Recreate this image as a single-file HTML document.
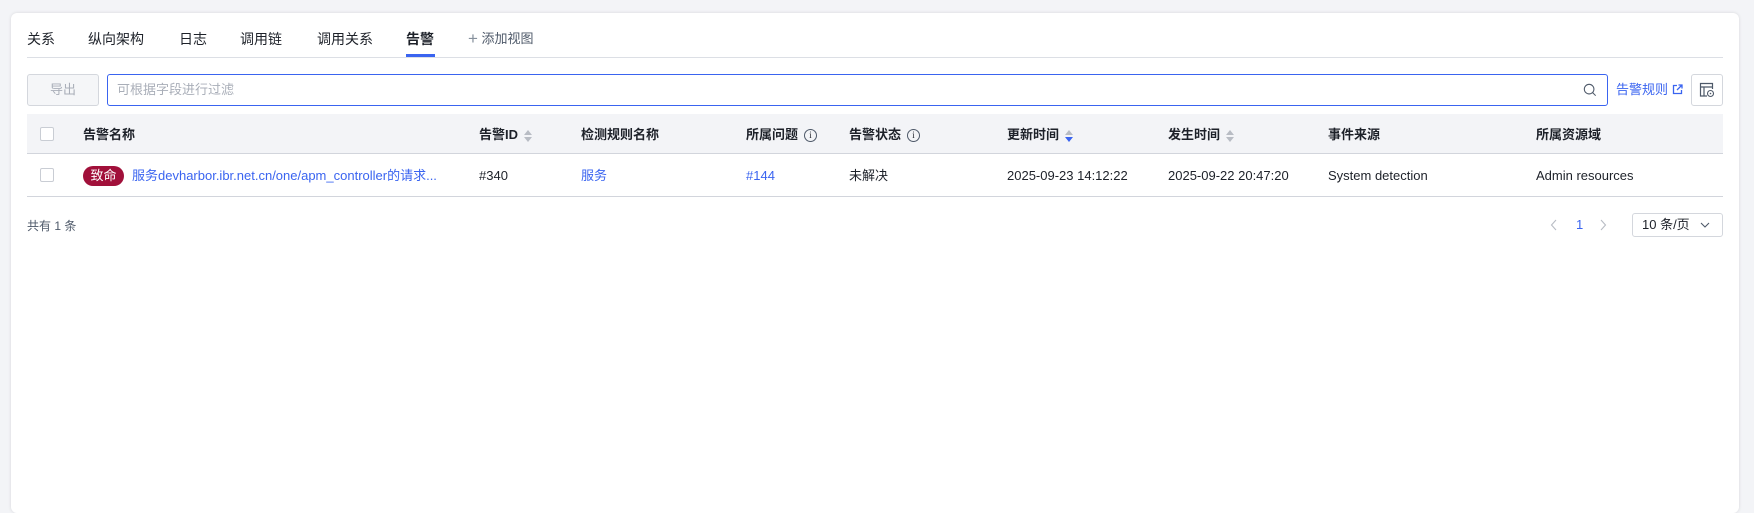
<!DOCTYPE html>
<html><head><meta charset="utf-8"><style>
*{box-sizing:border-box;margin:0;padding:0}
body{width:1754px;height:490px;background:#f3f4f7;font-family:"Liberation Sans","Noto Sans CJK SC",sans-serif;color:#1d2129;position:relative;overflow:hidden;font-size:13px}
.card{position:absolute;left:11px;top:13px;width:1728px;height:500px;background:#fff;border-radius:6px;box-shadow:0 0 3px rgba(0,0,0,.12)}
.a{position:absolute;white-space:nowrap}
.tab{position:absolute;top:29px;font-size:14px;color:#1d2129;line-height:20px}
.th{position:absolute;top:126px;font-weight:bold;font-size:13px;line-height:18px;color:#1d2129}
.td{position:absolute;top:167px;font-size:13px;line-height:18px;color:#1d2129}
.blue{color:#3a64f0}
.cb{position:absolute;left:40px;width:14px;height:14px;border:1px solid #c9cdd4;border-radius:2px;background:#fff}
.sort{display:inline-block;vertical-align:middle;margin-left:6px;width:8px;height:12px;position:relative}
.sort:before{content:"";position:absolute;left:0;top:0;border-left:4px solid transparent;border-right:4px solid transparent;border-bottom:5px solid #b8bcc4}
.sort:after{content:"";position:absolute;left:0;top:7px;border-left:4px solid transparent;border-right:4px solid transparent;border-top:5px solid var(--d,#b8bcc4)}
.info{display:inline-block;vertical-align:middle;margin-left:6px;width:13px;height:13px;border:1px solid #4e5969;border-radius:50%;font-size:9px;line-height:11px;text-align:center;font-weight:normal;font-family:"Liberation Serif",serif}
</style></head><body>
<div class="card"></div>
<div class="tab" style="left:27px">关系</div>
<div class="tab" style="left:88px">纵向架构</div>
<div class="tab" style="left:179px">日志</div>
<div class="tab" style="left:240px">调用链</div>
<div class="tab" style="left:317px">调用关系</div>
<div class="tab" style="left:406px;font-weight:bold">告警</div>
<div class="tab" style="left:468px;color:#4e5969;font-size:13px"><span style="font-size:17px;color:#86909c;vertical-align:-1px">+</span> 添加视图</div>
<div class="a" style="left:406px;top:54px;width:29px;height:3px;background:#3a64f0"></div>
<div class="a" style="left:27px;top:57px;width:1696px;height:1px;background:#dcdfe5"></div>

<div class="a" style="left:27px;top:74px;width:72px;height:32px;border:1px solid #d4d7dd;border-radius:3px;background:#f5f6f8;color:#a9aeb8;text-align:center;line-height:30px">导出</div>
<div class="a" style="left:107px;top:74px;width:1501px;height:32px;border:1px solid #3a64f0;border-radius:3px;background:#fff;color:#a9aeb8;line-height:30px;padding-left:9px">可根据字段进行过滤</div>
<svg class="a" style="left:1583px;top:83px" width="14" height="14" viewBox="0 0 16 16"><circle cx="7" cy="7" r="5.5" fill="none" stroke="#4e5969" stroke-width="1.2"/><path d="M11 11l3.5 3.5" stroke="#4e5969" stroke-width="1.2"/></svg>
<div class="a blue" style="left:1616px;top:81px;line-height:18px">告警规则</div>
<svg class="a" style="left:1672px;top:84px" width="11" height="11" viewBox="0 0 11 11"><path d="M5 1.5H1.5v8h8V6M6.5 1h3.5v3.5M10 1L5 6" fill="none" stroke="#3a64f0" stroke-width="1.3"/></svg>
<div class="a" style="left:1691px;top:74px;width:32px;height:32px;border:1px solid #d4d7dd;border-radius:3px;background:#fff"></div>
<svg class="a" style="left:1698px;top:81px" width="18" height="18" viewBox="0 0 18 18"><path d="M9 15H2.5V2.5h12V8M2.5 6h12M6 6v9" fill="none" stroke="#4e5969" stroke-width="1.2"/><circle cx="12.5" cy="12.5" r="3" fill="none" stroke="#4e5969" stroke-width="1.1"/><circle cx="12.5" cy="12.5" r="0.8" fill="#4e5969"/></svg>

<div class="a" style="left:27px;top:114px;width:1696px;height:40px;background:#f3f4f7;border-bottom:1px solid #d2d5dc"></div>
<div class="cb" style="top:127px"></div>
<div class="th" style="left:83px">告警名称</div>
<div class="th" style="left:479px">告警ID<span class="sort"></span></div>
<div class="th" style="left:581px">检测规则名称</div>
<div class="th" style="left:746px">所属问题<span class="info">i</span></div>
<div class="th" style="left:849px">告警状态<span class="info">i</span></div>
<div class="th" style="left:1007px">更新时间<span class="sort" style="--d:#3a64f0"></span></div>
<div class="th" style="left:1168px">发生时间<span class="sort"></span></div>
<div class="th" style="left:1328px">事件来源</div>
<div class="th" style="left:1536px">所属资源域</div>

<div class="a" style="left:27px;top:196px;width:1696px;height:1px;background:#d2d5dc"></div>
<div class="cb" style="top:168px"></div>
<div class="a" style="left:83px;top:166px;width:41px;height:20px;border-radius:10px;background:#a1103a;color:#fff;text-align:center;line-height:20px;font-size:13px">致命</div>
<div class="td blue" style="left:132px">服务devharbor.ibr.net.cn/one/apm_controller的请求...</div>
<div class="td" style="left:479px">#340</div>
<div class="td blue" style="left:581px">服务</div>
<div class="td blue" style="left:746px">#144</div>
<div class="td" style="left:849px">未解决</div>
<div class="td" style="left:1007px">2025-09-23 14:12:22</div>
<div class="td" style="left:1168px">2025-09-22 20:47:20</div>
<div class="td" style="left:1328px">System detection</div>
<div class="td" style="left:1536px">Admin resources</div>

<div class="a" style="left:27px;top:217px;font-size:12px;color:#4e5969">共有 1 条</div>
<svg class="a" style="left:1550px;top:219px" width="8" height="12" viewBox="0 0 8 12"><path d="M6 1L1.5 6 6 11" fill="none" stroke="#b8bcc4" stroke-width="1.1"/></svg>
<div class="a blue" style="left:1576px;top:217px">1</div>
<svg class="a" style="left:1599px;top:219px" width="8" height="12" viewBox="0 0 8 12"><path d="M2 1l4.5 5L2 11" fill="none" stroke="#b8bcc4" stroke-width="1.1"/></svg>
<div class="a" style="left:1632px;top:213px;width:91px;height:24px;border:1px solid #d4d7dd;border-radius:3px;line-height:22px;padding-left:9px">10 条/页</div>
<svg class="a" style="left:1700px;top:221px" width="10" height="8" viewBox="0 0 10 8"><path d="M1 2l4 4 4-4" fill="none" stroke="#4e5969" stroke-width="1.1"/></svg>
</body></html>
